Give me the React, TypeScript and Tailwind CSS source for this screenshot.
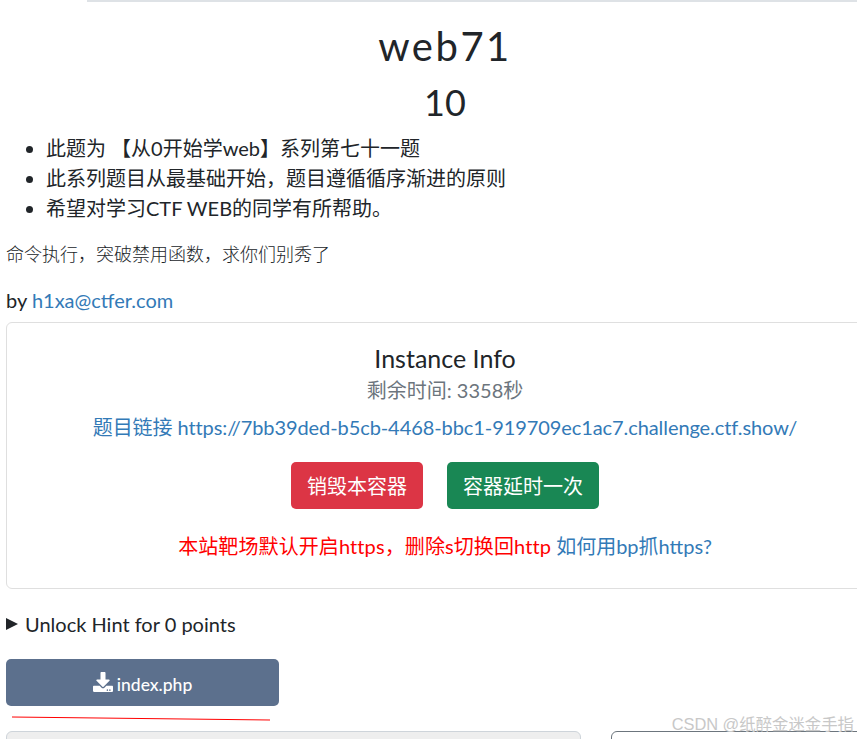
import React from 'react';
import { FaDownload } from 'react-icons/fa';

const font = "font-['Lato','Noto_Sans_CJK_SC',sans-serif]";

const bullets = [
  '此题为 【从0开始学web】系列第七十一题',
  '此系列题目从最基础开始，题目遵循循序渐进的原则',
  '希望对学习CTF WEB的同学有所帮助。',
];

const App: React.FC = () => {
  return (
    <div className={`${font} relative h-[739px] w-[857px] overflow-hidden bg-white text-[#212529]`}>
      <div className="ml-[87px] h-[2px] border-t-2 border-l border-[#dee2e6]" />
      <div className="w-[878px] ml-[6px]">
        <h1 className="mt-[20px] h-[48px] text-center text-[40px] leading-[48px] font-normal tracking-[2.5px]">web71</h1>
        <h2 className="mt-[8px] h-[48px] text-center text-[36px] leading-[48px] font-normal">10</h2>
        <ul className="mt-[7px] list-disc pl-[40px] text-[20px] leading-[30px]">
          {bullets.map((b) => (
            <li key={b}>{b}</li>
          ))}
        </ul>
        <p className="mt-[18px] text-[18px] leading-[24px] font-['Noto_Sans_CJK_SC',sans-serif] font-light">命令执行，突破禁用函数，求你们别秀了</p>
        <p className="mt-[23px] text-[20px] leading-[24px]">
          by <a className="text-[#337ab7]">h1xa@ctfer.com</a>
        </p>
        <div className="mt-[10px] h-[267px] rounded-[6px] border border-[#dfdfdf] pt-[21px] text-center">
          <div className="text-[25px] leading-[29px]">Instance Info</div>
          <div className="mt-[5px] text-[20px] leading-[24px] text-[#6c757d]">剩余时间: 3358秒</div>
          <div className="mt-[10px] text-[20px] leading-[30px] tracking-[-0.08px] text-[#337ab7]">
            题目链接 https://7bb39ded-b5cb-4468-bbc1-919709ec1ac7.challenge.ctf.show/
          </div>
          <div className="mt-[20px] flex justify-center gap-[24px]">
            <button className="h-[47px] w-[132px] rounded-[5px] bg-[#dc3545] text-[20px] text-white">销毁本容器</button>
            <button className="h-[47px] w-[152px] rounded-[5px] bg-[#198754] text-[20px] text-white">容器延时一次</button>
          </div>
          <div className="mt-[22px] text-[20px] leading-[30px]">
            <span className="tracking-[0.1px] text-[#ff0000]">本站靶场默认开启https，删除s切换回http</span>{' '}
            <a className="text-[#337ab7]">如何用bp抓https?</a>
          </div>
        </div>
        <div className="mt-[23px] flex items-center text-[20px] leading-[24px]">
          <span className="mr-[7px] h-0 w-0 border-y-[6px] border-l-[12px] border-y-transparent border-l-[#212529]" />
          Unlock Hint for 0 points
        </div>
        <div className="mt-[23px]">
          <button className="flex h-[47px] w-[273px] items-center justify-center gap-[4px] rounded-[5px] bg-[#5c708d] pt-[5px] text-[17.5px] font-medium text-white">
            <FaDownload size={20} className="-mt-[6px]" />
            index.php
          </button>
          <svg width="273" height="16" className="block">
            <path d="M6 11 L264 14" stroke="#ff0000" strokeWidth="1" fill="none" />
          </svg>
        </div>
        <div className="mt-[9px] flex">
          <div className="h-[40px] w-[575px] rounded-[6px] border border-[#ced4da] bg-[#eeeeee]" />
          <div className="ml-[30px] h-[40px] w-[273px] rounded-[6px] border border-[#6c757d]" />
        </div>
      </div>
      <div className="absolute right-[3px] top-[714px] font-['Liberation_Sans','Noto_Sans_CJK_SC',sans-serif] text-[16.4px] leading-[20px] text-[#c8c8c8]">
        CSDN @纸醉金迷金手指
      </div>
    </div>
  );
};

export default App;
